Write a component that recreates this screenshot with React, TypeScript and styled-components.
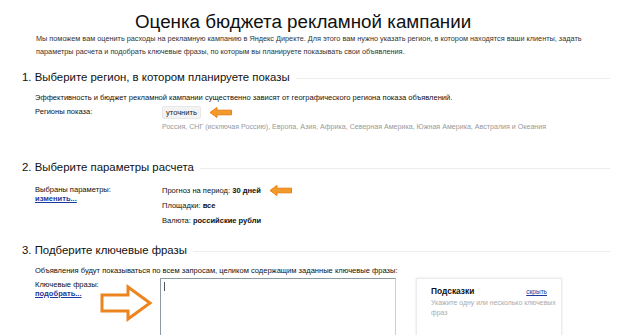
import styled, { createGlobalStyle } from "styled-components";

const Global = createGlobalStyle`
  html, body {
    margin: 0;
    padding: 0;
    background: #fff;
    overflow: hidden;
  }
  body {
    font-family: "Liberation Sans", Arial, sans-serif;
    color: #111;
  }
`;

const Page = styled.main`
  width: 620px;
  height: 335px;
  padding: 12px 10px 0 22px;
  box-sizing: border-box;
  overflow: hidden;
`;

const Title = styled.h1`
  margin: 0 0 0 113px;
  font-size: 18.8px;
  font-weight: normal;
  line-height: 20px;
`;

const Intro = styled.p`
  margin: 0 0 11px 14px;
  font-size: 7.3px;
  line-height: 13px;
  color: #333;
  width: 565px;
`;

const Section = styled.section<{ $after: number }>`
  margin-bottom: ${(p) => p.$after}px;
`;

const Heading = styled.h2`
  display: flex;
  align-items: center;
  gap: 6px;
  margin: 0 0 5px;
  font-size: 11.4px;
  font-weight: normal;
  line-height: 16px;
  color: #111;

  &::after {
    content: "";
    flex: 1;
    border-bottom: 1px solid #ececec;
    margin-top: 3px;
  }
`;

const Body = styled.div`
  padding-left: 13px;
  font-size: 7.55px;
  line-height: 15px;
`;

const Row = styled.div<{ $top?: number }>`
  display: grid;
  grid-template-columns: 127px 1fr;
  align-items: start;
  margin-top: ${(p) => p.$top ?? 0}px;
`;

const Label = styled.div`
  display: flex;
  flex-direction: column;
  line-height: 9px;
  padding-top: 2px;
  white-space: nowrap;
`;

const Link = styled.a`
  color: #1c3a9c;
  text-decoration: underline;
  font-weight: bold;
`;

const Values = styled.div`
  display: flex;
  flex-direction: column;
`;

const Line = styled.div`
  display: flex;
  align-items: center;
  gap: 8px;
  height: 15px;
`;

const Button = styled.span`
  display: inline-block;
  padding: 0 3px;
  line-height: 11px;
  background: #f3f3f3;
  border: 1px solid #e8e8e8;
  border-radius: 2px;
  color: #222;
`;

const Gray = styled.div`
  color: #999;
  font-size: 7.1px;
  line-height: 14px;
  white-space: nowrap;
`;

const Strong = styled.b`
  font-weight: bold;
`;

const Keywords = styled.div`
  display: grid;
  grid-template-columns: 64px 61px 246px 156px;
`;

const ArrowCell = styled.div`
  padding-top: 6px;
`;

const TextArea = styled.div`
  height: 70px;
  border: 1px solid #8c9aa2;
  border-right-color: #c9d0d4;
  border-bottom: none;
  position: relative;
  box-sizing: border-box;
  margin-right: 10px;

  &::before {
    content: "";
    position: absolute;
    left: 3px;
    top: 3px;
    width: 1px;
    height: 9px;
    background: #555;
  }
`;

const Hints = styled.div`
  height: 70px;
  margin-left: 10px;
  border: 1px solid #ececec;
  border-bottom: none;
  box-shadow: 0 0 2px rgba(0, 0, 0, 0.12);
  padding: 7px 14px 0 14px;
  box-sizing: border-box;
`;

const HintsHead = styled.div`
  display: flex;
  justify-content: space-between;
  align-items: baseline;
  font-size: 8.4px;
  font-weight: bold;
  line-height: 11px;
  margin-bottom: 1px;
`;

const HideLink = styled.a`
  color: #1c3a9c;
  font-size: 6.5px;
  font-weight: normal;
  text-decoration: underline;
`;

const HintText = styled.div`
  color: #aaa;
  font-size: 6.9px;
  line-height: 10px;
  width: 132px;
`;

function SmallArrow() {
  return (
    <svg width="24" height="13" viewBox="0 0 24 13">
      <path
        d="M1 6.5 L8 1.5 L8 4.2 L22.5 4.2 L22.5 8.8 L8 8.8 L8 11.5 Z"
        fill="#f39a2c"
        stroke="#ec7f12"
        strokeWidth="1"
        strokeLinejoin="round"
      />
    </svg>
  );
}

function BigArrow() {
  return (
    <svg width="54" height="38" viewBox="0 0 54 38">
      <path
        d="M3 11 L29 11 L29 3 L51 19 L29 35 L29 27 L3 27 Z"
        fill="#fff"
        stroke="#ec8420"
        strokeWidth="3"
        strokeLinejoin="miter"
      />
    </svg>
  );
}

export default function App() {
  return (
    <Page>
      <Global />
      <Title>Оценка бюджета рекламной кампании</Title>
      <Intro>
        Мы поможем вам оценить расходы на рекламную кампанию в Яндекс Директе. Для этого вам нужно
        указать регион, в котором находятся ваши клиенты, задать параметры расчета и подобрать
        ключевые фразы, по которым вы планируете показывать свои объявления.
      </Intro>

      <Section $after={25}>
        <Heading>1. Выберите регион, в котором планируете показы</Heading>
        <Body>
          <div>
            Эффективность и бюджет рекламной кампании существенно зависят от географического
            региона показа объявлений.
          </div>
          <Row>
            <Label>Регионы показа:</Label>
            <Values>
              <Line>
                <Button>уточнить</Button>
                <SmallArrow />
              </Line>
              <Gray>
                Россия, СНГ (исключая Россию), Европа, Азия, Африка, Северная Америка, Южная
                Америка, Австралия и Океания
              </Gray>
            </Values>
          </Row>
        </Body>
      </Section>

      <Section $after={14}>
        <Heading>2. Выберите параметры расчета</Heading>
        <Body>
          <Row $top={8}>
            <Label>
              <span>Выбраны параметры:</span>
              <Link>изменить...</Link>
            </Label>
            <Values>
              <Line>
                <span>
                  Прогноз на период: <Strong>30 дней</Strong>
                </span>
                <SmallArrow />
              </Line>
              <Line>
                <span>
                  Площадки: <Strong>все</Strong>
                </span>
              </Line>
              <Line>
                <span>
                  Валюта: <Strong>российские рубли</Strong>
                </span>
              </Line>
            </Values>
          </Row>
        </Body>
      </Section>

      <Section $after={0}>
        <Heading>3. Подберите ключевые фразы</Heading>
        <Body>
          <div>
            Объявления будут показываться по всем запросам, целиком содержащим заданные ключевые
            фразы:
          </div>
          <Keywords>
            <Label>
              <span>Ключевые фразы:</span>
              <Link>подобрать...</Link>
            </Label>
            <ArrowCell>
              <BigArrow />
            </ArrowCell>
            <TextArea />
            <Hints>
              <HintsHead>
                <span>Подсказки</span>
                <HideLink>скрыть</HideLink>
              </HintsHead>
              <HintText>Укажите одну или несколько ключевых фраз</HintText>
            </Hints>
          </Keywords>
        </Body>
      </Section>
    </Page>
  );
}
